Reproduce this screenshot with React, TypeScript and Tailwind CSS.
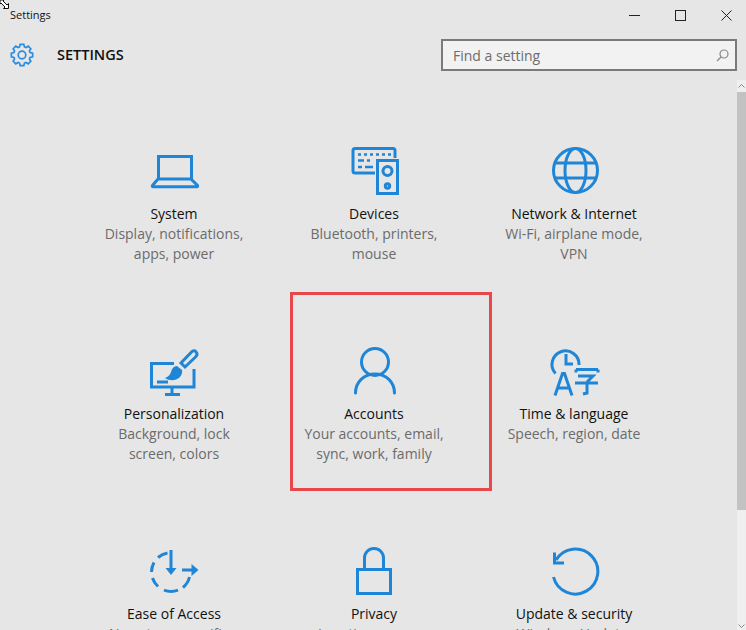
import type { ReactNode } from "react";

const BLUE = "#1f85d6";

function Icon({ children }: { children: ReactNode }) {
  return (
    <svg
      fill="none"
      height="52"
      stroke={BLUE}
      strokeWidth="3"
      viewBox="0 0 52 52"
      width="52"
    >
      {children}
    </svg>
  );
}

// 8 tooth outline, same shape as the settings gear in the header
function gearPath() {
  const pts: string[] = [];
  for (let i = 0; i < 8; i++) {
    const a = (i * Math.PI) / 4;
    const steps: [number, number][] = [
      [8.4, -0.3],
      [10.8, -0.17],
      [10.8, 0.17],
      [8.4, 0.3],
    ];
    for (const [r, d] of steps) {
      const x = 12 + r * Math.sin(a + d);
      const y = 12 - r * Math.cos(a + d);
      pts.push(`${x.toFixed(2)} ${y.toFixed(2)}`);
    }
  }
  return `M${pts.join("L")}Z`;
}

function SystemIcon() {
  return (
    <Icon>
      <path d="M10.500 33V10.500h33V33" />
      <path d="M10 33h33l6.500 6.500a.8.8 0 0 1-.6 1.300H5.100a.8.8 0 0 1-.6-1.300z" />
    </Icon>
  );
}

function DevicesIcon() {
  return (
    <Icon>
      <path d="M27 27H7a2 2 0 0 1-2-2V4.500a2 2 0 0 1 2-2h38a2 2 0 0 1 2 2V12" />
      <path
        d="M10 8.500h3M16 8.500h3M22 8.500h3M28 8.500h3M34 8.500h3M40 8.500h3M10 14.500h6M19 14.500h3M10 21h4M17 21h8"
        strokeWidth="2.500"
      />
      <rect height="33" width="20" x="29.500" y="14.500" />
      <circle cx="39.500" cy="25" r="4.500" />
      <circle cx="39.500" cy="40" r="2.200" />
    </Icon>
  );
}

function NetworkIcon() {
  return (
    <Icon>
      <circle cx="27.500" cy="24.500" r="22" />
      <ellipse cx="27.500" cy="24.500" rx="10.500" ry="22" />
      <path d="M6 17h43M6 32h43" />
    </Icon>
  );
}

function PersonalizationIcon() {
  return (
    <Icon>
      <path d="M26 17.500H3.500V41H46V23" />
      <path d="M9 36h11M24 41v7M17 48.500h15" />
      <path d="M48.500 6.500c-1.500-2.500-3.500-2-5.500 0L33 17l4 4L47.500 11c1.500-1.500 2-3 1-4.500z" />
      <path
        d="M29 20c-4 .5-5 3-6 6-.8 3-3 5-6 6 5 3.500 12 2.500 15-1 2-2.500 2.500-5 2-7z"
        fill={BLUE}
        stroke="none"
      />
    </Icon>
  );
}

function AccountsIcon() {
  return (
    <Icon>
      <circle cx="27" cy="16" r="13.500" />
      <path d="M7.500 47c0-11 8.500-19 19.500-19s19.500 8 19.500 19" strokeLinecap="round" />
    </Icon>
  );
}

function TimeIcon() {
  return (
    <Icon>
      <path d="M7.500 27.500A13.500 13.500 0 1 1 31 19" />
      <path d="M18 8v10h7" />
      <path d="M7 49.500l7.500-22h2l7.500 22M9.500 42h12" />
      <path d="M28 23.500h22M28 23.500v3M50 23.500v3M30 30h15l-6 6M27 37h23M39 36v11l-4 1" />
    </Icon>
  );
}

function EaseIcon() {
  return (
    <Icon>
      <path d="M10 11.500A19.500 19.500 0 0 1 19.500 7" />
      <path d="M3.500 26A19.500 19.500 0 0 1 6 16.500" />
      <path d="M4.500 32A19.500 19.500 0 0 0 10 40.500" />
      <path d="M16 44.200A19.500 19.500 0 0 0 30 44.200" />
      <path d="M35 41.500A19.500 19.500 0 0 0 41.500 31" />
      <path d="M23 4v20" />
      <path d="M17.500 22h11L23 29z" fill={BLUE} stroke="none" />
      <path d="M34 24h11" />
      <path d="M43.500 18l7 6-7 6z" fill={BLUE} stroke="none" />
    </Icon>
  );
}

function PrivacyIcon() {
  return (
    <Icon>
      <rect height="24" width="33" x="9.500" y="23.500" />
      <path d="M16.500 23V12a9.500 9.500 0 0 1 19 0v11" />
    </Icon>
  );
}

function UpdateIcon() {
  return (
    <Icon>
      <path d="M8 14A22.500 22.500 0 1 1 5.500 31" />
      <path d="M6.500 6.500v10.500H16" />
    </Icon>
  );
}

const tiles = [
  { icon: <SystemIcon />, title: "System", lines: ["Display, notifications,", "apps, power"] },
  { icon: <DevicesIcon />, title: "Devices", lines: ["Bluetooth, printers,", "mouse"] },
  { icon: <NetworkIcon />, title: "Network & Internet", lines: ["Wi-Fi, airplane mode,", "VPN"] },
  { icon: <PersonalizationIcon />, title: "Personalization", lines: ["Background, lock", "screen, colors"] },
  { icon: <AccountsIcon />, title: "Accounts", lines: ["Your accounts, email,", "sync, work, family"] },
  { icon: <TimeIcon />, title: "Time & language", lines: ["Speech, region, date"] },
  { icon: <EaseIcon />, title: "Ease of Access", lines: ["Narrator, magnifier,", "high contrast"] },
  { icon: <PrivacyIcon />, title: "Privacy", lines: ["Location, camera"] },
  { icon: <UpdateIcon />, title: "Update & security", lines: ["Windows Update,", "recovery, backup"] },
];

export default function App() {
  return (
    <div className="relative h-[630px] w-[746px] overflow-hidden bg-[#e6e6e6] font-['Open_Sans',sans-serif] text-[14px]">
      {/* resize cursor caught in the capture */}
      <svg className="absolute left-0 top-0" fill="#fff" height="9" stroke="#111" viewBox="0 0 9 9" width="9">
        <path d="M8.500 8.500H3.500l1.500-1.500L1 3 0 4V0h4L3 1l4 4 1.500-1.500z" />
      </svg>

      <div className="flex h-[30px] items-center justify-between">
        <span className="pl-[10px] text-[11px] text-[#111]">Settings</span>
        <div className="flex items-center gap-[35px] pr-[14px]">
          <span className="h-px w-[11px] bg-[#222]" />
          <span className="h-[11px] w-[11px] border border-[#222]" />
          <svg height="11" stroke="#222" viewBox="0 0 11 11" width="11">
            <path d="M.5.500l10 10M10.500.500l-10 10" />
          </svg>
        </div>
      </div>

      <div className="flex h-[50px] items-center justify-between pr-[9px]">
        <div className="flex items-center">
          <svg className="ml-[10px]" fill="none" height="24" stroke="#2a8ce0" strokeWidth="1.700" viewBox="0 0 24 24" width="24">
            <path d={gearPath()} />
            <circle cx="12" cy="12" r="3.800" />
          </svg>
          <span className="ml-[23px] text-[14.500px] font-semibold text-[#111]">SETTINGS</span>
        </div>
        <div className="flex h-[32px] w-[296px] items-center justify-between border-2 border-[#7a7a7a] bg-[#f2f2f2] pl-[10px] pr-[6px] text-[#6d6d6d]">
          <span>Find a setting</span>
          <svg fill="none" height="13" stroke="#888" strokeWidth="1.200" viewBox="0 0 13 13" width="13">
            <circle cx="8" cy="5" r="4" />
            <path d="M5 8l-4 4" />
          </svg>
        </div>
      </div>

      <div className="ml-[74px] mt-[66px] grid w-[600px] grid-cols-3">
        {tiles.map((tile) => (
          <div className="flex h-[200px] flex-col items-center text-center" key={tile.title}>
            <div className="h-[58px]">{tile.icon}</div>
            <div className="leading-[20px] text-[#111]">{tile.title}</div>
            {tile.lines.map((line) => (
              <div className="leading-[20px] text-[#6b6b6b]" key={line}>
                {line}
              </div>
            ))}
          </div>
        ))}
      </div>

      {/* red annotation drawn over the screenshot */}
      <div className="absolute left-[290px] top-[292px] h-[199px] w-[202px] border-[3px] border-[#e8484a]" />

      <div className="absolute bottom-0 right-0 top-[80px] flex w-[9px] flex-col items-center bg-[#efefef]">
        <svg className="my-[4px]" fill="none" height="4" stroke="#888" viewBox="0 0 7 4" width="7">
          <path d="M.5 3.500l3-3 3 3" />
        </svg>
        <div className="h-[418px] w-full bg-[#c2c2c2]" />
        <svg className="mt-auto mb-[2px]" fill="none" height="4" stroke="#888" viewBox="0 0 7 4" width="7">
          <path d="M.5.500l3 3 3-3" />
        </svg>
      </div>
    </div>
  );
}
